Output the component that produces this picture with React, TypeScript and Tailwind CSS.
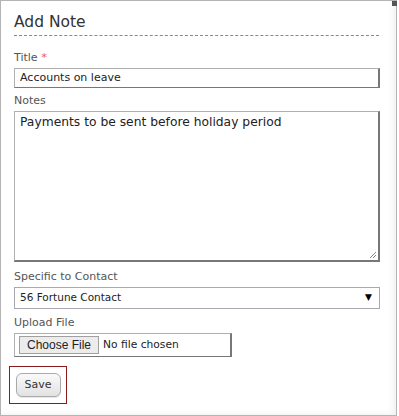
import React from "react";

const FONT = { fontFamily: '"DejaVu Sans", Verdana, sans-serif' };

function Label({ text, required }: { text: string; required?: boolean }) {
  return (
    <div className="text-[11px] leading-[14px] text-[#555]">
      {text}
      {required && <span className="ml-[4px] text-[#f2543c]">*</span>}
    </div>
  );
}

export default function App() {
  return (
    <div className="h-[416px] w-[399px] bg-white" style={FONT}>
      <div className="relative h-[416px] w-[397px] border border-[#b4b4b4] bg-white shadow-[inset_-7px_-5px_6px_-4px_rgba(0,0,0,0.06)]">
        {/* corner marker */}
        <div className="absolute right-[-1px] top-0 h-[5px] w-[5px] bg-[#555]" />

        <div className="px-[13px] pt-[10px]">
          <h2 className="text-[15.5px] leading-[22px] text-[#333]">Add Note</h2>
          <div className="mt-[2px] w-[365px] border-t border-dashed border-[#888]" />

          <div className="mt-[15px]">
            <Label text="Title" required />
            <div className="mt-[3px] flex h-[20px] w-[366px] items-center border border-[#b0b0b0] border-b-[#777] border-r-2 border-r-[#777] pl-[5px] text-[11px] text-[#222]">
              Accounts on leave
            </div>
          </div>

          <div className="mt-[6px]">
            <Label text="Notes" />
            <div className="relative mt-[3px] h-[151px] w-[366px] border border-[#b0b0b0] border-b-2 border-b-[#777] border-r-2 border-r-[#777] pl-[5px] pt-[1px] text-[12.3px] text-[#222]">
              Payments to be sent before holiday period
              <svg className="absolute bottom-[1px] right-[1px]" width="9" height="9" viewBox="0 0 9 9">
                <path d="M8 2 L2 8 M8 5 L5 8" stroke="#888" strokeWidth="1" />
              </svg>
            </div>
          </div>

          <div className="mt-[8px]">
            <Label text="Specific to Contact" />
            <div className="mt-[3px] flex h-[22px] w-[366px] items-center justify-between border border-[#a8a8b0] pl-[5px] pr-[7px] text-[10.5px] text-[#222]">
              <span>56 Fortune Contact</span>
              <span className="text-[9px] text-black">▼</span>
            </div>
          </div>

          <div className="mt-[7px]">
            <Label text="Upload File" />
            <div className="mt-[3px] flex h-[24px] w-[218px] items-center border border-[#b0b0b0] border-b-[#777] border-r-2 border-r-[#777] pl-[4px] text-[10.7px] text-[#222]">
              <span
                className="flex h-[18px] items-center border border-[#a0a0a0] bg-[#ececec] px-[7px] text-[#222]"
                style={{ fontFamily: '"Liberation Sans", Arial, sans-serif', fontSize: "12px" }}
              >
                Choose File
              </span>
              <span className="ml-[4px]">No file chosen</span>
            </div>
          </div>
        </div>

        <div className="ml-[8px] mt-[9px] flex h-[38px] w-[58px] items-center justify-center border border-[#8b1a1a]">
          <button className="flex h-[24px] w-[45px] items-center justify-center rounded-[6px] border border-[#aaa] bg-gradient-to-b from-[#fafafa] to-[#e2e2e2] text-[11px] text-[#333] shadow-[0_1px_1px_rgba(0,0,0,0.1)]">
            Save
          </button>
        </div>
      </div>
    </div>
  );
}
